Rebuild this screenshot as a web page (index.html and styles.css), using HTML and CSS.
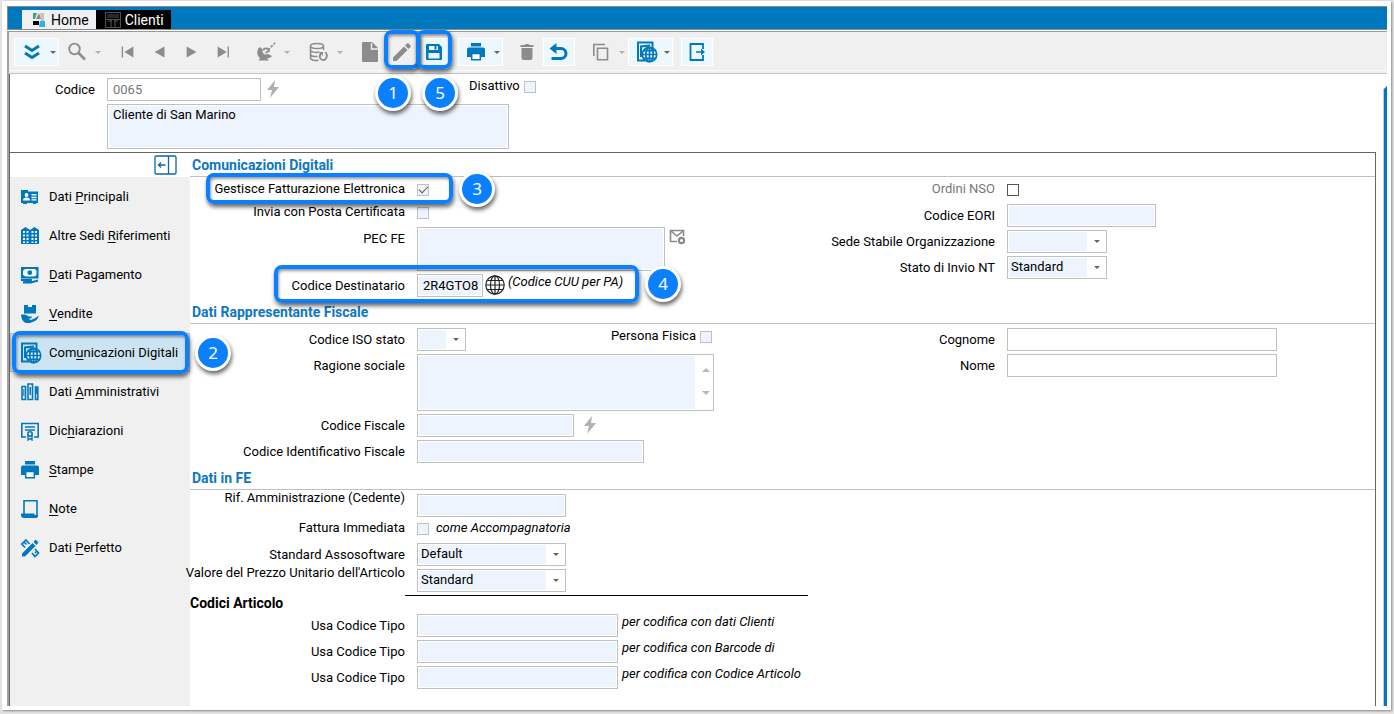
FILE: index.html
```html
<!DOCTYPE html>
<html lang="it">

<head>
    <meta charset="UTF-8">
    <title>Clienti</title>
    <link rel="stylesheet" href="styles.css">
</head>

<body>
    <!-- icone -->
    <svg class="sprite" aria-hidden="true">
        <symbol id="i-chevrons" viewBox="0 0 20 20"><path d="M3 4l7 4.500 7-4.500M3 11l7 4.500 7-4.500" fill="none" stroke="currentColor" stroke-width="3"/></symbol>
        <symbol id="i-search" viewBox="0 0 20 20"><circle cx="7.500" cy="7" r="5.300" fill="none" stroke="currentColor" stroke-width="1.800"/><path d="M11.500 11l6.500 6.500" stroke="currentColor" stroke-width="2.600"/></symbol>
        <symbol id="i-first" viewBox="0 0 20 20"><path d="M3 4h1.500v12H3zM16 4v12L6 10z" fill="currentColor"/></symbol>
        <symbol id="i-prev" viewBox="0 0 20 20"><path d="M15 4v12L4 10z" fill="currentColor"/></symbol>
        <symbol id="i-next" viewBox="0 0 20 20"><path d="M4 4v12l11-6z" fill="currentColor"/></symbol>
        <symbol id="i-last" viewBox="0 0 20 20"><path d="M14 4h1.500v12H14zM3 4v12l10-6z" fill="currentColor"/></symbol>
        <symbol id="i-dish" viewBox="0 0 20 20"><path d="M3.500 5C0 9 1 14 4 16l-1.500 2.500H13L11 16.500c2 0 4-1 5-2.500L12 12q-3 1-4.500-.5T6.500 7z" fill="currentColor"/><path d="M7.500 8.500c0-3 5-3 5.500.5l-3.500 2" fill="none" stroke="currentColor" stroke-width="1.800"/><path d="M12 8l7-7" stroke="currentColor" stroke-width="1.800" stroke-dasharray="2.500 1.500"/></symbol>
        <symbol id="i-db" viewBox="0 0 20 20"><g fill="none" stroke="currentColor" stroke-width="1.500"><ellipse cx="8" cy="4" rx="6.500" ry="2.500"/><path d="M1.500 4v12c0 2 5 3 8 2.300M14.500 4v4M1.500 8c0 2 5 3 9 2M1.500 12c0 2 4 3 7 2.300"/><path d="M12 11c-3 5 0 7 2.500 7s5-4 2-8" stroke-width="1.800"/></g><path d="M10 10h4v4z" fill="currentColor"/></symbol>
        <symbol id="i-doc" viewBox="0 0 20 22"><path d="M3 1h9l6 6v13q0 1-1 1H3q-1 0-1-1V2q0-1 1-1z" fill="currentColor"/><path d="M11.500 2v6H18" fill="none" stroke="#f0f0f0" stroke-width="1.400"/></symbol>
        <symbol id="i-pencil" viewBox="0 0 20 20"><path d="M1 15.500L12 4.500 15.500 8l-11 11H1zM13 3.500l2-2q.8-.8 1.600 0l1.900 1.900q.8.8 0 1.600l-2 2z" fill="currentColor"/></symbol>
        <symbol id="i-save" viewBox="0 0 20 20"><path fill-rule="evenodd" d="M3 2h12l3 3v12q0 1-1 1H3q-1 0-1-1V3q0-1 1-1zM5 4v4h9V4zM4.500 11v5.500h11V11z" fill="currentColor"/><path d="M10.500 4h2v3.500h-2z" fill="currentColor"/></symbol>
        <symbol id="i-print" viewBox="0 0 20 20"><path d="M5 1h10v3.500H5zM3 5.500h14q2 0 2 2V15h-4v-4H5v4H1V7.500q0-2 2-2z" fill="currentColor"/><path d="M5.700 11.500h8.600v6.300H5.700z" fill="#fff" stroke="currentColor" stroke-width="1.500"/></symbol>
        <symbol id="i-trash" viewBox="0 0 20 20"><path d="M3.500 3h4l1-1h3l1 1h4v2h-13zM4.500 6h11v10q0 2-2 2h-7q-2 0-2-2z" fill="currentColor"/></symbol>
        <symbol id="i-undo" viewBox="0 0 20 20"><path d="M3 6.500h9a5 5 0 0 1 0 10H2.500" fill="none" stroke="currentColor" stroke-width="3"/><path d="M7.500 1v11L.5 6.500z" fill="currentColor"/></symbol>
        <symbol id="i-copy" viewBox="0 0 20 20"><path d="M2.800 14V2.500H14M6.500 6.200h10v11.500h-10z" fill="none" stroke="currentColor" stroke-width="1.600"/></symbol>
        <symbol id="i-web" viewBox="0 0 22 22"><path d="M9 19.500H2V1.500h14.500v6M5 16V5.500l9-1" fill="none" stroke="currentColor" stroke-width="2"/><circle cx="13.500" cy="13.500" r="7.500" fill="#fff"/><g fill="none" stroke="currentColor" stroke-width="1.700"><circle cx="13.500" cy="13.500" r="7.200"/><ellipse cx="13.500" cy="13.500" rx="3.700" ry="7.200"/><path d="M13.500 6v15M6 13.500h15M7.500 9.700h12M7.500 17.300h12"/></g></symbol>
        <symbol id="i-exit" viewBox="0 0 20 20"><path d="M16 7V2H3.500v16H16v-5" fill="none" stroke="currentColor" stroke-width="1.800"/><path d="M9 9.200h5V6.500l4 3.500-4 3.500v-2.700H9z" fill="currentColor"/></symbol>
        <symbol id="i-bolt" viewBox="0 0 12 18"><path d="M8 0L0 10h5l-2 8L12 7H7z" fill="currentColor"/></symbol>
        <symbol id="i-mail" viewBox="0 0 18 16"><path d="M8 12.500H1.500V1.500h13V7M2 2l6 5 6-5" fill="none" stroke="currentColor" stroke-width="1.600"/><circle cx="12.500" cy="11.500" r="2.600" fill="none" stroke="currentColor" stroke-width="2.200"/></symbol>
        <symbol id="i-globe" viewBox="0 0 20 20"><g fill="none" stroke="currentColor" stroke-width="1.200"><circle cx="10" cy="10" r="9.200"/><ellipse cx="10" cy="10" rx="4.500" ry="9.200"/><path d="M10 1v18M1 10h18M2.500 5.500h15M2.500 14.500h15"/></g></symbol>
        <symbol id="i-card" viewBox="0 0 20 20"><path d="M1 3h7v1.500h10V16h-2v1h-3v-1H7v1H3v-1H1z" fill="currentColor"/><circle cx="6.500" cy="8" r="1.900" fill="#fff"/><path d="M3 13.500q0-3 3.500-3t3.500 3zM11.500 7h5v1.500h-5zM11.500 9.700h5v1.500h-5zM11.500 12.300h5v1.200h-5z" fill="#fff"/></symbol>
        <symbol id="i-building" viewBox="0 0 20 20"><path d="M1 4l4.500-3L10 4l4.500-3L19 4v14H1z" fill="currentColor"/><path d="M3 5h2v2H3zM6.500 5h2v2h-2zM11.500 5h2v2h-2zM15 5h2v2h-2zM3 8.500h2v2H3zM6.500 8.500h2v2h-2zM11.500 8.500h2v2h-2zM15 8.500h2v2h-2zM3 12h2v2H3zM6.500 12h2v2h-2zM11.500 12h2v2h-2zM15 12h2v2h-2zM3 15.500h2V17H3zM6.500 15.500h2V17h-2zM11.500 15.500h2V17h-2zM15 15.500h2V17h-2z" fill="#fff"/></symbol>
        <symbol id="i-money" viewBox="0 0 20 20"><path d="M2 3h15.500v9.500H2z" fill="#fff" stroke="currentColor" stroke-width="2"/><path d="M2 3h4.500L2 6.500zM18 3h-4.500L18 6.500zM2 12.500h4.500L2 9zM18 12.500h-4.500L18 9z" fill="currentColor"/><circle cx="9.800" cy="7.700" r="2.400" fill="currentColor"/><path d="M1 15l10-.3V16zM3 17.500h8l7-2" fill="none" stroke="currentColor" stroke-width="1.900"/></symbol>
        <symbol id="i-sell" viewBox="0 0 20 20"><path d="M4 1h4v2h4V1h4v8.500H4zM1 10.500h4l4 2h3l-1 2H8.500l2 1.500 4-1.500 4.500-3q-1 4-4 5.500l-5 2H6q-4.500-1-5-8.500z" fill="currentColor"/></symbol>
        <symbol id="i-binders" viewBox="0 0 20 20"><path d="M2 4.500h3.500v13H2zM8 2h4.500v15.500H8zM15.500 5h2.300v12.500h-2.300z" fill="none" stroke="currentColor" stroke-width="1.600"/><path d="M3.300 7h1v7h-1zM9.500 5H11v8H9.500zM16 6h2v6h-2z" fill="currentColor"/></symbol>
        <symbol id="i-cert" viewBox="0 0 20 20"><path d="M6 16H1.800V2.500h16.400V16H14M5 6h10M5 9h10" fill="none" stroke="currentColor" stroke-width="1.600"/><circle cx="10" cy="13" r="2.200" fill="none" stroke="currentColor" stroke-width="1.600"/><path d="M8 14.500V19l2-1.500 2 1.500v-4.500" fill="none" stroke="currentColor" stroke-width="1.400"/></symbol>
        <symbol id="i-note" viewBox="0 0 20 20"><path d="M4 15V1.800h13V17" fill="none" stroke="currentColor" stroke-width="1.600"/><path d="M1 14.500h13.500V16H18v1q0 2-2 2H4q-3 0-3-3z" fill="currentColor"/></symbol>
        <symbol id="i-tools" viewBox="0 0 20 20"><path d="M2 15.500L12.500 5l3 3L5 18.500H2zM13.500 4l2-2.500 3 3-2 2.500z" fill="currentColor"/><path d="M9.500 6L6 2 1.800 6 5 9.500M4 4l2.500 2.500M12 15l3 3.500 3.500-3.500L15 11M15 15l2-2" fill="none" stroke="currentColor" stroke-width="1.700"/></symbol>
        <symbol id="i-collapse" viewBox="0 0 23 20"><path d="M2 1h19l1 1v16l-1 1H2l-1-1V2zM14.500 1v18" fill="none" stroke="currentColor" stroke-width="1.300"/><path d="M11.500 10H4.500M7 7.500L4.500 10 7 12.500" fill="none" stroke="currentColor" stroke-width="1.300"/></symbol>
        <symbol id="i-home" viewBox="0 0 14 16"><path d="M1 1h4L3 7H1z" fill="#3aa76d"/><path d="M8 1h4v8H9z" fill="#c4c4c4"/><path d="M4 7l3-6 2 6z" fill="#888"/><path d="M1 9h6v4H1z" fill="#000"/><path d="M8 9h5v6H7z" fill="#2bb4e8"/></symbol>
        <symbol id="i-form" viewBox="0 0 16 16"><path d="M.5.500h15v15H.5zM2 3h12M2 5h12M1 7.500h14M6 8v7M10 8v7M3 9h4M9 9h4" fill="none" stroke="#505050" stroke-width="1.100"/></symbol>
    </svg>

    <div class="window">
        <nav class="titlebar">
            <a class="tab" href="#"><svg width="14" height="16"><use href="#i-home"/></svg>Home</a>
            <a class="tab tab-active" href="#"><svg width="16" height="16"><use href="#i-form"/></svg>Clienti</a>
        </nav>

        <div class="toolbar">
            <div class="group">
                <button class="tool split on" aria-label="Espandi"><svg width="20" height="20"><use href="#i-chevrons"/></svg></button>
                <button class="tool split" aria-label="Cerca"><svg width="20" height="20"><use href="#i-search"/></svg></button>
            </div>
            <div class="group">
                <button class="tool" aria-label="Primo"><svg width="18" height="18"><use href="#i-first"/></svg></button>
                <button class="tool" aria-label="Precedente"><svg width="18" height="18"><use href="#i-prev"/></svg></button>
                <button class="tool" aria-label="Successivo"><svg width="18" height="18"><use href="#i-next"/></svg></button>
                <button class="tool" aria-label="Ultimo"><svg width="18" height="18"><use href="#i-last"/></svg></button>
            </div>
            <div class="group">
                <button class="tool split" aria-label="Ricezione"><svg width="20" height="20"><use href="#i-dish"/></svg></button>
            </div>
            <div class="group">
                <button class="tool split" aria-label="Archivio"><svg width="20" height="20"><use href="#i-db"/></svg></button>
            </div>
            <div class="group">
                <button class="tool" aria-label="Nuovo"><svg width="20" height="22"><use href="#i-doc"/></svg></button>
                <button class="tool" aria-label="Modifica"><svg width="20" height="20"><use href="#i-pencil"/></svg><span class="mark mark-tool"><b class="badge badge-below">1</b></span></button>
                <button class="tool on" aria-label="Salva"><svg width="20" height="20"><use href="#i-save"/></svg><span class="mark mark-tool"><b class="badge badge-below badge-right">5</b></span></button>
            </div>
            <div class="group">
                <button class="tool split on" aria-label="Stampa"><svg width="20" height="20"><use href="#i-print"/></svg></button>
            </div>
            <div class="group">
                <button class="tool" aria-label="Elimina"><svg width="20" height="20"><use href="#i-trash"/></svg></button>
                <button class="tool on" aria-label="Annulla"><svg width="20" height="20"><use href="#i-undo"/></svg></button>
            </div>
            <div class="group">
                <button class="tool split" aria-label="Copia"><svg width="20" height="20"><use href="#i-copy"/></svg></button>
                <button class="tool split on" aria-label="Web"><svg width="22" height="22"><use href="#i-web"/></svg></button>
            </div>
            <div class="group">
                <button class="tool on" aria-label="Esci"><svg width="20" height="20"><use href="#i-exit"/></svg></button>
            </div>
        </div>

        <div class="workspace">
            <div class="content">
                <form class="record">
                    <div class="row">
                        <label for="codice">Codice</label>
                        <input class="text plain w-154" id="codice" type="text" value="0065">
                        <svg class="bolt" width="12" height="18"><use href="#i-bolt"/></svg>
                        <span class="check-after"><label for="disattivo">Disattivo</label><input id="disattivo" type="checkbox"></span>
                    </div>
                    <div class="row">
                        <label></label>
                        <textarea class="text record-name" aria-label="Ragione sociale cliente">Cliente di San Marino</textarea>
                    </div>
                </form>

                <div class="pages">
                    <nav class="side">
                        <div class="side-top"><button class="collapse" aria-label="Comprimi menu"><svg width="23" height="20"><use href="#i-collapse"/></svg></button></div>
                        <a href="#"><svg width="20" height="20"><use href="#i-card"/></svg><span>Dati <u>P</u>rincipali</span></a>
                        <a href="#"><svg width="20" height="20"><use href="#i-building"/></svg><span>Altre Sedi <u>R</u>iferimenti</span></a>
                        <a href="#"><svg width="20" height="20"><use href="#i-money"/></svg><span><u>D</u>ati Pagamento</span></a>
                        <a href="#"><svg width="20" height="20"><use href="#i-sell"/></svg><span><u>V</u>endite</span></a>
                        <a class="current" href="#"><svg width="22" height="22"><use href="#i-web"/></svg><span>Com<u>u</u>nicazioni Digitali</span><span class="mark mark-side"><b class="badge badge-beside">2</b></span></a>
                        <a href="#"><svg width="20" height="20"><use href="#i-binders"/></svg><span>Dati <u>A</u>mministrativi</span></a>
                        <a href="#"><svg width="20" height="20"><use href="#i-cert"/></svg><span>Dic<u>h</u>iarazioni</span></a>
                        <a href="#"><svg width="20" height="20"><use href="#i-print"/></svg><span><u>S</u>tampe</span></a>
                        <a href="#"><svg width="20" height="20"><use href="#i-note"/></svg><span><u>N</u>ote</span></a>
                        <a href="#"><svg width="20" height="20"><use href="#i-tools"/></svg><span>Dati <u>P</u>erfetto</span></a>
                    </nav>

                    <form class="sheet">
                        <h2>Comunicazioni Digitali</h2>
                        <div class="section">
                            <div class="column">
                                <div class="row row-check">
                                    <label for="fe">Gestisce Fatturazione Elettronica</label>
                                    <input id="fe" type="checkbox" checked>
                                    <span class="mark mark-fe"><b class="badge badge-beside">3</b></span>
                                </div>
                                <div class="row row-check">
                                    <label for="pec">Invia con Posta Certificata</label>
                                    <input id="pec" type="checkbox">
                                </div>
                                <div class="row">
                                    <label for="pecfe">PEC FE</label>
                                    <textarea class="text pec" id="pecfe"></textarea>
                                    <svg class="mail" width="18" height="16"><use href="#i-mail"/></svg>
                                </div>
                                <div class="row">
                                    <label for="dest">Codice Destinatario</label>
                                    <input class="text w-66" id="dest" type="text" value="2R4GTO8">
                                    <svg class="globe" width="20" height="20"><use href="#i-globe"/></svg>
                                    <i>(Codice CUU per PA)</i>
                                    <span class="mark mark-dest"><b class="badge badge-beside">4</b></span>
                                </div>
                            </div>
                            <div class="column column-right">
                                <div class="row row-check off">
                                    <label for="nso">Ordini NSO</label>
                                    <input id="nso" type="checkbox">
                                </div>
                                <div class="row">
                                    <label for="eori">Codice EORI</label>
                                    <input class="text w-149" id="eori" type="text">
                                </div>
                                <div class="row">
                                    <label for="sede">Sede Stabile Organizzazione</label>
                                    <span class="combo w-100"><select id="sede"><option></option></select></span>
                                </div>
                                <div class="row">
                                    <label for="stato">Stato di Invio NT</label>
                                    <span class="combo w-100"><select id="stato"><option>Standard</option></select></span>
                                </div>
                            </div>
                        </div>

                        <h2>Dati Rappresentante Fiscale</h2>
                        <div class="section">
                            <div class="column">
                                <div class="row row-iso">
                                    <label for="iso">Codice ISO stato</label>
                                    <span class="combo w-49"><select id="iso"><option></option></select></span>
                                    <span class="check-after"><label for="fisica">Persona Fisica</label><input id="fisica" type="checkbox"></span>
                                </div>
                                <div class="row">
                                    <label for="ragione">Ragione sociale</label>
                                    <span class="memo"><textarea class="text" id="ragione"></textarea></span>
                                </div>
                                <div class="row">
                                    <label for="cf">Codice Fiscale</label>
                                    <input class="text w-157" id="cf" type="text">
                                    <svg class="bolt bolt-far" width="12" height="18"><use href="#i-bolt"/></svg>
                                </div>
                                <div class="row">
                                    <label for="cif">Codice Identificativo Fiscale</label>
                                    <input class="text w-227" id="cif" type="text">
                                </div>
                            </div>
                            <div class="column column-right">
                                <div class="row">
                                    <label for="cognome">Cognome</label>
                                    <input class="text plain w-270" id="cognome" type="text">
                                </div>
                                <div class="row">
                                    <label for="nome">Nome</label>
                                    <input class="text plain w-270" id="nome" type="text">
                                </div>
                            </div>
                        </div>

                        <h2>Dati in FE</h2>
                        <div class="section">
                            <div class="column">
                                <div class="row row-high">
                                    <label for="rif">Rif. Amministrazione (Cedente)</label>
                                    <input class="text w-149" id="rif" type="text">
                                </div>
                                <div class="row row-check">
                                    <label for="immediata">Fattura Immediata</label>
                                    <input id="immediata" type="checkbox">
                                    <i class="spaced">come Accompagnatoria</i>
                                </div>
                                <div class="row">
                                    <label for="asso">Standard Assosoftware</label>
                                    <span class="combo w-149"><select id="asso"><option>Default</option></select></span>
                                </div>
                                <div class="row row-high">
                                    <label for="prezzo">Valore del Prezzo Unitario dell'Articolo</label>
                                    <span class="combo w-149"><select id="prezzo"><option>Standard</option></select></span>
                                </div>
                                <h3>Codici Articolo</h3>
                                <div class="row">
                                    <label for="tipo1">Usa Codice Tipo</label>
                                    <input class="text w-201" id="tipo1" type="text">
                                    <i>per codifica con dati Clienti</i>
                                </div>
                                <div class="row">
                                    <label for="tipo2">Usa Codice Tipo</label>
                                    <input class="text w-201" id="tipo2" type="text">
                                    <i>per codifica con Barcode di</i>
                                </div>
                                <div class="row">
                                    <label for="tipo3">Usa Codice Tipo</label>
                                    <input class="text w-201" id="tipo3" type="text">
                                    <i>per codifica con Codice Articolo</i>
                                </div>
                            </div>
                        </div>
                    </form>
                </div>
            </div>
            <div class="rail"></div>
        </div>
    </div>
</body>

</html>
```
FILE: styles.css
```css
@charset "UTF-8";

/* ========BASIC======== */
* {
    box-sizing: border-box;
}

body {
    display: flex;
    min-height: 100vh;
    margin: 0;
    padding: 1px 3px 4px 2px;
    font-family: Roboto, "Liberation Sans", sans-serif;
    font-size: 13px;
    line-height: 16px;
    color: #000;
    background: #e4e4e4;
}

a {
    color: inherit;
    text-decoration: none;
}

h2,
h3 {
    margin: 0;
    font-size: 14px;
}

button,
input,
textarea,
select {
    margin: 0;
    font: inherit;
    color: inherit;
}

svg {
    flex: none;
}

.sprite {
    position: absolute;
    width: 0;
    height: 0;
}

.window {
    display: flex;
    flex: 1;
    flex-direction: column;
    padding: 5px 4px 4px 5px;
    background: #fff;
    box-shadow: 1px 1px 2px #888;
}


/* ========TITLE BAR======== */
.titlebar {
    display: flex;
    height: 24px;
    padding: 3px 0 0 14px;
    background: #0078be;
    border: solid #8a8a8a;
    border-width: 1px 0 1px 1px;
}

.tab {
    display: flex;
    align-items: center;
    gap: 5px;
    height: 19px;
    padding: 0 7px 0 10px;
    font-size: 14px;
    background: #f0f0f0;
}

.tab-active {
    gap: 4px;
    padding: 0 7px 0 9px;
    color: #fff;
    background: #000;
}


/* ========TOOLBAR======== */
.toolbar {
    display: flex;
    gap: 8px;
    height: 43px;
    margin-top: 1px;
    padding: 6px 0 0 5px;
    background: linear-gradient(#fafafa, #fafafa) 0 38px / 100% 1px no-repeat #f0f0f0;
    border-top: 1px solid #9a9a9a;
    border-bottom: 1px solid #c4c4c4;
    border-left: 2px solid #a0a0a0;
}

.group {
    display: flex;
}

.tool {
    position: relative;
    display: flex;
    align-items: center;
    justify-content: center;
    width: 32px;
    height: 28px;
    padding: 0;
    color: #8c8c8c;
    background: none;
    border: 1px solid transparent;
}

.tool.on {
    color: #0078be;
    background: #edf7fe;
    border-color: #fff;
}

.split {
    justify-content: flex-start;
    width: 45px;
    padding-left: 7px;
}

.split::after {
    content: "";
    position: absolute;
    top: 12px;
    right: 2px;
    border: 3px solid transparent;
    border-top-color: #b0b0b0;
    border-bottom: 0;
}

.split.on::after {
    border-top-color: #666;
}


/* ========CONTENT======== */
.workspace {
    display: flex;
    flex: 1;
    border-left: 2px solid #a0a0a0;
}

.content {
    display: flex;
    flex: 1;
    flex-direction: column;
    border-left: 1px solid #666;
}

.rail {
    width: 4px;
    margin: 12px 0 0 7px;
    background: #0078be;
    border-left: 1px solid #ccc;
    clip-path: polygon(100% 0, 100% 100%, 0 100%, 0 4px);
}

.record {
    display: flex;
    flex-direction: column;
    gap: 3px;
    padding: 4px 0 3px;
}

.record .row > label {
    width: 85px;
}

.pages {
    display: flex;
    flex: 1;
    border: solid #666;
    border-width: 1px 1px 0 0;
}


/* ========SIDE MENU======== */
.side {
    width: 180px;
    background: #f0f0f0;
}

.side-top {
    display: flex;
    justify-content: flex-end;
    height: 24px;
    padding: 2px 13px 0 0;
    background: #fff;
}

.collapse {
    height: 20px;
    padding: 0;
    color: #0a68a5;
    background: none;
    border: 0;
}

.side a {
    position: relative;
    display: flex;
    align-items: center;
    gap: 9px;
    height: 39px;
    padding-left: 10px;
}

.side a svg {
    color: #0078be;
}

.side a.current {
    gap: 7px;
    background: #cce4f2;
    box-shadow: inset 0 0 0 1px #c0c0c0;
}

u {
    text-underline-offset: 2px;
}


/* ========FORM======== */
.sheet {
    flex: 1;
}

.sheet h2 {
    height: 24px;
    padding: 4px 2px 3px;
    color: #0d78bf;
    border-bottom: 1px solid #c0c0c0;
}

.sheet h3 {
    position: relative;
    height: 16px;
}

/* riga a destra del titolo */
.sheet h3::after {
    content: "";
    position: absolute;
    top: 0;
    left: 215px;
    width: 403px;
    border-top: 1px solid #000;
}

.section {
    display: grid;
    grid-template-columns: 627px 1fr;
    padding: 4px 0 3px;
}

.column {
    display: flex;
    flex-direction: column;
    gap: 3px;
}

.row {
    position: relative;
    display: flex;
    align-items: flex-start;
}

.row > label {
    display: flex;
    justify-content: flex-end;
    width: 215px;
    margin-right: 12px;
    padding-top: 4px;
    white-space: nowrap;
}

.column-right .row > label {
    width: 178px;
}

.row-check {
    height: 20px;
}

.column .row-check > label {
    padding-top: 0;
}

.row-high > label {
    margin-top: -4px;
    padding-top: 0;
}

.row-iso {
    width: 522px;
}

.off {
    color: #777;
}

.row i {
    margin-left: 4px;
    white-space: nowrap;
}

.row .spaced {
    margin-left: 7px;
}

.text {
    height: 23px;
    padding: 0 2px 0 5px;
    background: #edf4fd;
    border: 1px solid #c0c0c0;
    border-radius: 0;
    box-shadow: inset 0 0 0 1px #fff;
    outline: 0;
    resize: none;
}

textarea.text {
    padding: 2px 5px;
}

.plain {
    color: #777;
    background: #fff;
}

.record-name {
    width: 402px;
    height: 45px;
}

.pec {
    width: 248px;
    height: 44px;
}

input[type="checkbox"] {
    flex: none;
    display: grid;
    place-items: center;
    width: 12px;
    height: 12px;
    margin-top: 3px;
    appearance: none;
    background: #edf4fd;
    border: 1px solid #c0c0c0;
}

input[type="checkbox"]:checked::before {
    content: "";
    width: 8px;
    height: 4px;
    margin-bottom: 3px;
    border: solid #555;
    border-width: 0 0 1px 1px;
    transform: rotate(-45deg);
}

.off input[type="checkbox"] {
    background: #fff;
    border-color: #555;
}

.check-after {
    display: flex;
    gap: 4px;
    margin-left: auto;
}

.record .check-after {
    margin-left: 190px;
}

.combo {
    position: relative;
    display: flex;
}

.combo select {
    width: 100%;
    height: 23px;
    padding: 0 20px 2px 3px;
    appearance: none;
    background: linear-gradient(#edf4fd, #edf4fd) 1px 1px / calc(100% - 20px) calc(100% - 2px) no-repeat #fff;
    border: 1px solid #c0c0c0;
    border-radius: 0;
    outline: 0;
}

.combo::after {
    content: "";
    position: absolute;
    top: 10px;
    right: 7px;
    border: 3px solid transparent;
    border-top-color: #666;
    border-bottom: 0;
}

.memo {
    position: relative;
    width: 297px;
}

.memo textarea {
    display: block;
    width: 100%;
    height: 57px;
    background: linear-gradient(#edf4fd, #edf4fd) 0 0 / calc(100% - 18px) 100% no-repeat #fff;
}

/* frecce di scorrimento */
.memo::before,
.memo::after {
    content: "";
    position: absolute;
    right: 4px;
    border: 4px solid transparent;
}

.memo::before {
    top: 14px;
    border-bottom-color: #b8b8b8;
    border-top: 0;
}

.memo::after {
    bottom: 16px;
    border-top-color: #b8b8b8;
    border-bottom: 0;
}

.bolt {
    margin: 2px 0 0 6px;
    color: #b0b0b0;
}

.bolt-far {
    margin-left: 10px;
}

.mail {
    margin: 2px 0 0 4px;
    color: #8a8a8a;
}

.globe {
    margin: 1px 0 0 2px;
    color: #222;
}

.row .globe + i {
    margin-left: 3px;
}

.w-49 { width: 49px; }
.w-66 { width: 66px; }
.w-100 { width: 100px; }
.w-149 { width: 149px; }
.w-154 { width: 154px; }
.w-157 { width: 157px; }
.w-201 { width: 201px; }
.w-227 { width: 227px; }
.w-270 { width: 270px; }


/* ========CALLOUTS======== */
.mark {
    position: absolute;
    z-index: 2;
    border: 4px solid #0a80ff;
    border-radius: 8px;
    box-shadow: 1px 3px 4px rgba(0, 0, 0, .6), inset 1px 2px 3px rgba(0, 0, 0, .4);
    pointer-events: none;
}

.mark-tool {
    top: -9px;
    right: -3px;
    bottom: -4px;
    left: -3px;
}

.mark-side {
    top: -2px;
    right: 1px;
    bottom: -2px;
    left: 2px;
}

.mark-fe {
    top: -8px;
    left: 16px;
    width: 247px;
    height: 31px;
}

.mark-dest {
    top: -9px;
    left: 84px;
    width: 365px;
    height: 38px;
}

.badge {
    position: absolute;
    width: 36px;
    height: 36px;
    font: 17px/30px "Noto Sans", sans-serif;
    text-align: center;
    color: #fff;
    background: #0a80ff;
    border: 3px solid #fff;
    border-radius: 50%;
    box-shadow: 1px 3px 4px rgba(0, 0, 0, .6);
}

.badge-below {
    top: 41px;
    right: 5px;
}

.badge-right {
    right: -10px;
}

.badge-beside {
    top: calc(50% - 18px);
    right: -46px;
}
```
